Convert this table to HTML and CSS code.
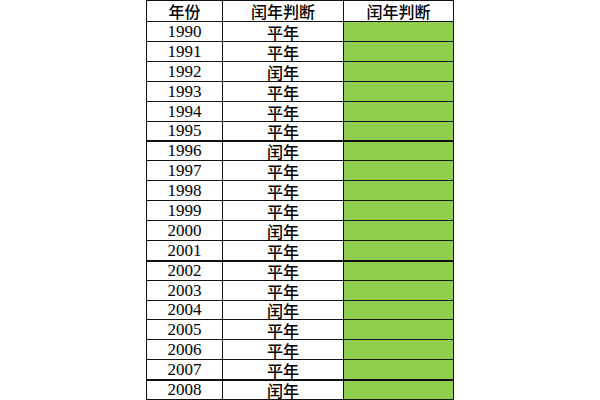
FILE: index.html
```html
<!DOCTYPE html>
<html lang="zh">
<head>
<meta charset="utf-8">
<link rel="stylesheet" href="styles.css">
</head>
<body>
<table class="sheet">
  <colgroup><col class="c1"><col class="c2"><col class="c3"></colgroup>
  <thead>
    <tr class="head"><th>年份</th><th>闰年判断</th><th>闰年判断</th></tr>
  </thead>
  <tbody>
    <tr><td class="yr">1990</td><td>平年</td><td class="fill"></td></tr>
    <tr><td class="yr">1991</td><td>平年</td><td class="fill"></td></tr>
    <tr><td class="yr">1992</td><td>闰年</td><td class="fill"></td></tr>
    <tr><td class="yr">1993</td><td>平年</td><td class="fill"></td></tr>
    <tr><td class="yr">1994</td><td>平年</td><td class="fill"></td></tr>
    <tr class="short"><td class="yr">1995</td><td>平年</td><td class="fill"></td></tr>
    <tr class="thick"><td class="yr">1996</td><td>闰年</td><td class="fill"></td></tr>
    <tr><td class="yr">1997</td><td>平年</td><td class="fill"></td></tr>
    <tr><td class="yr">1998</td><td>平年</td><td class="fill"></td></tr>
    <tr><td class="yr">1999</td><td>平年</td><td class="fill"></td></tr>
    <tr><td class="yr">2000</td><td>闰年</td><td class="fill"></td></tr>
    <tr><td class="yr">2001</td><td>平年</td><td class="fill"></td></tr>
    <tr class="thick"><td class="yr">2002</td><td>平年</td><td class="fill"></td></tr>
    <tr><td class="yr">2003</td><td>平年</td><td class="fill"></td></tr>
    <tr class="short"><td class="yr">2004</td><td>闰年</td><td class="fill"></td></tr>
    <tr><td class="yr">2005</td><td>平年</td><td class="fill"></td></tr>
    <tr><td class="yr">2006</td><td>平年</td><td class="fill"></td></tr>
    <tr><td class="yr">2007</td><td>平年</td><td class="fill"></td></tr>
    <tr class="thick"><td class="yr">2008</td><td>闰年</td><td class="fill"></td></tr>
  </tbody>
</table>
</body>
</html>
```
FILE: styles.css
```css
html, body {
  margin: 0;
  padding: 0;
  background: #ffffff;
}

.sheet {
  margin-left: 146px;
  border-collapse: collapse;
  table-layout: fixed;
  font-family: "Liberation Serif", "Noto Sans CJK SC", serif;
  font-size: 17px;
  color: #000;
}

.c1 { width: 76px; }
.c2 { width: 121px; }
.c3 { width: 110px; }

.sheet th,
.sheet td {
  border: 1px solid #111;
  padding: 0;
  text-align: center;
  line-height: 18px;
  font-weight: normal;
  white-space: nowrap;
}

.sheet th,
.sheet td:not(.yr) {
  font-family: "Noto Sans CJK SC", sans-serif;
  font-size: 16px;
  font-weight: 500;
}

.head { height: 21px; }
.sheet tbody tr { height: 20px; }
.sheet tbody tr.short { height: 19px; }
.sheet tbody tr.thick td { box-shadow: inset 0 1px 0 #111; }

.fill { background: #8fcf4d; }
```
